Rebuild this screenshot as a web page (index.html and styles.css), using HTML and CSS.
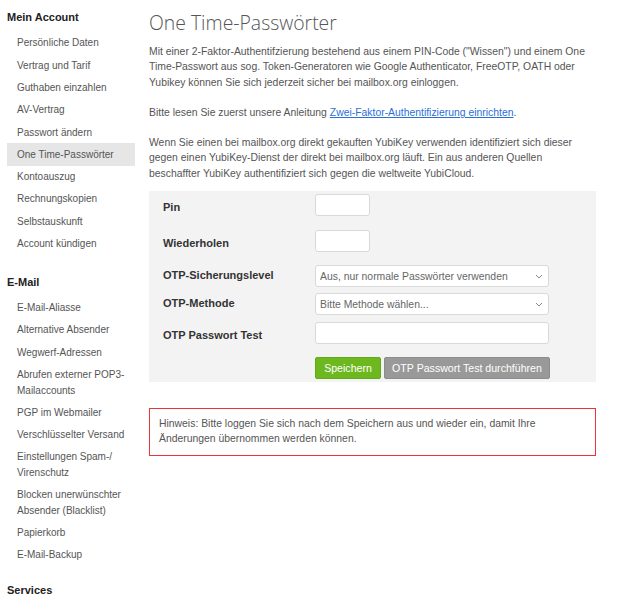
FILE: index.html
```html
<!DOCTYPE html>
<html lang="de">
<head>
    <meta charset="UTF-8">
    <meta name="viewport" content="width=device-width, initial-scale=1.0">
    <title>One Time-Passwörter</title>
    <link rel="stylesheet" href="styles.css">
</head>
<body>
    <div class="page">
        <nav class="sidebar">
            <div class="nav-section">
                <h3>Mein Account</h3>
                <a href="#">Persönliche Daten</a>
                <a href="#">Vertrag und Tarif</a>
                <a href="#">Guthaben einzahlen</a>
                <a href="#">AV-Vertrag</a>
                <a href="#">Passwort ändern</a>
                <a href="#" class="active">One Time-Passwörter</a>
                <a href="#">Kontoauszug</a>
                <a href="#">Rechnungskopien</a>
                <a href="#">Selbstauskunft</a>
                <a href="#">Account kündigen</a>
            </div>
            <div class="nav-section section-mail">
                <h3>E-Mail</h3>
                <a href="#">E-Mail-Aliasse</a>
                <a href="#">Alternative Absender</a>
                <a href="#">Wegwerf-Adressen</a>
                <a href="#">Abrufen externer POP3-Mailaccounts</a>
                <a href="#">PGP im Webmailer</a>
                <a href="#">Verschlüsselter Versand</a>
                <a href="#">Einstellungen Spam-/ Virenschutz</a>
                <a href="#">Blocken unerwünschter Absender (Blacklist)</a>
                <a href="#">Papierkorb</a>
                <a href="#">E-Mail-Backup</a>
            </div>
            <div class="nav-section">
                <h3>Services</h3>
            </div>
        </nav>

        <main class="content">
            <h1>One Time-Passwörter</h1>
            <p>Mit einer 2-Faktor-Authentifzierung bestehend aus einem PIN-Code ("Wissen") und einem One Time-Passwort aus sog. Token-Generatoren wie Google Authenticator, FreeOTP, OATH oder Yubikey können Sie sich jederzeit sicher bei mailbox.org einloggen.</p>
            <p>Bitte lesen Sie zuerst unsere Anleitung <a href="#">Zwei-Faktor-Authentifizierung einrichten</a>.</p>
            <p>Wenn Sie einen bei mailbox.org direkt gekauften YubiKey verwenden identifiziert sich dieser gegen einen YubiKey-Dienst der direkt bei mailbox.org läuft. Ein aus anderen Quellen beschaffter YubiKey authentifiziert sich gegen die weltweite YubiCloud.</p>

            <form class="otp-form">
                <div class="form-row row-pin">
                    <label>Pin</label>
                    <input type="password" class="input-short">
                </div>
                <div class="form-row row-repeat">
                    <label>Wiederholen</label>
                    <input type="password" class="input-short">
                </div>
                <div class="form-row row-level">
                    <label>OTP-Sicherungslevel</label>
                    <div class="select-wrap">
                        <select>
                            <option>Aus, nur normale Passwörter verwenden</option>
                        </select>
                        <svg class="chevron" width="8" height="5" viewBox="0 0 8 5"><path d="M1 1l3 3 3-3" fill="none" stroke="#888" stroke-width="1"/></svg>
                    </div>
                </div>
                <div class="form-row row-method">
                    <label>OTP-Methode</label>
                    <div class="select-wrap">
                        <select>
                            <option>Bitte Methode wählen...</option>
                        </select>
                        <svg class="chevron" width="8" height="5" viewBox="0 0 8 5"><path d="M1 1l3 3 3-3" fill="none" stroke="#888" stroke-width="1"/></svg>
                    </div>
                </div>
                <div class="form-row row-test">
                    <label>OTP Passwort Test</label>
                    <input type="text" class="input-long">
                </div>
                <div class="form-row">
                    <label></label>
                    <div class="buttons">
                        <button type="button" class="btn btn-save">Speichern</button>
                        <button type="button" class="btn btn-test">OTP Passwort Test durchführen</button>
                    </div>
                </div>
            </form>

            <div class="hint">
                Hinweis: Bitte loggen Sie sich nach dem Speichern aus und wieder ein, damit Ihre Änderungen übernommen werden können.
            </div>
        </main>
    </div>
</body>
</html>
```

FILE: styles.css
```css
body {
    margin: 0;
    padding: 0;
    background-color: #fff;
    color: #555;
    font-family: "Liberation Sans", Arial, sans-serif;
    font-size: 10.4px;
}

.page {
    display: flex;
    gap: 14px;
    padding-top: 10px;
}

/* sidebar */
.sidebar {
    width: 135px;
    flex-shrink: 0;
}

.nav-section {
    margin-bottom: 20px;
}

.section-mail {
    margin-bottom: 17px;
}

.nav-section h3 {
    margin: 0 0 7px 7px;
    font-size: 11px;
    line-height: 15px;
    font-weight: bold;
    color: #222;
}

.nav-section a {
    display: block;
    margin-left: 7px;
    padding: 3.4px 10px;
    line-height: 15.5px;
    font-size: 10px;
    color: #555;
    text-decoration: none;
}

.nav-section a.active {
    background-color: #e6e6e6;
}

/* content */
.content {
    width: 447px;
    margin-top: -1px;
}

.content h1 {
    margin: 0 0 8px 0;
    font-family: "Open Sans", sans-serif;
    font-weight: 300;
    font-size: 19.4px;
    line-height: 27px;
    color: #555;
}

.content p {
    margin: 0 0 15px 0;
    line-height: 15.3px;
}

.content p a {
    color: #2a6fd6;
}

.otp-form {
    margin-top: -5px;
    background-color: #f3f3f3;
    padding: 3px 0 3px 14px;
}

.form-row {
    display: flex;
    align-items: center;
    margin-bottom: 13px;
}

.form-row:last-child {
    margin-bottom: 0;
}

.row-pin { margin-bottom: 14px; }
.row-level { margin-bottom: 6px; }
.row-method { margin-bottom: 7px; }

.form-row label {
    width: 152px;
    flex-shrink: 0;
    padding-top: 4px;
    font-size: 11px;
    font-weight: bold;
    color: #333;
}

.row-level label,
.row-method label {
    padding-top: 0;
    padding-bottom: 2px;
}

.form-row input,
.form-row select {
    box-sizing: border-box;
    height: 22px;
    border: 1px solid #d9d9d9;
    border-radius: 3px;
    background-color: #fff;
    font-family: "Liberation Sans", Arial, sans-serif;
    font-size: 10.4px;
    color: #666;
}

.input-short {
    width: 55px;
}

.input-long {
    width: 234px;
}

.select-wrap {
    position: relative;
    width: 234px;
}

.select-wrap select {
    width: 100%;
    padding: 0 4px;
    appearance: none;
    -webkit-appearance: none;
}

.chevron {
    position: absolute;
    right: 6px;
    top: 9px;
}

.buttons {
    display: flex;
    gap: 3px;
}

.btn {
    height: 22px;
    padding: 0;
    border-radius: 2px;
    font-family: "Liberation Sans", Arial, sans-serif;
    font-size: 10.6px;
    color: #fff;
    white-space: nowrap;
    cursor: pointer;
}

.btn-save {
    width: 66px;
    background-color: #6db81f;
    border: 1px solid #62a81b;
}

.btn-test {
    width: 166px;
    background-color: #999;
    border: 1px solid #8c8c8c;
}

.hint {
    margin-top: 26px;
    border: 1px solid #e8343a;
    padding: 7px 10px 9px 9px;
    line-height: 15px;
}
```
